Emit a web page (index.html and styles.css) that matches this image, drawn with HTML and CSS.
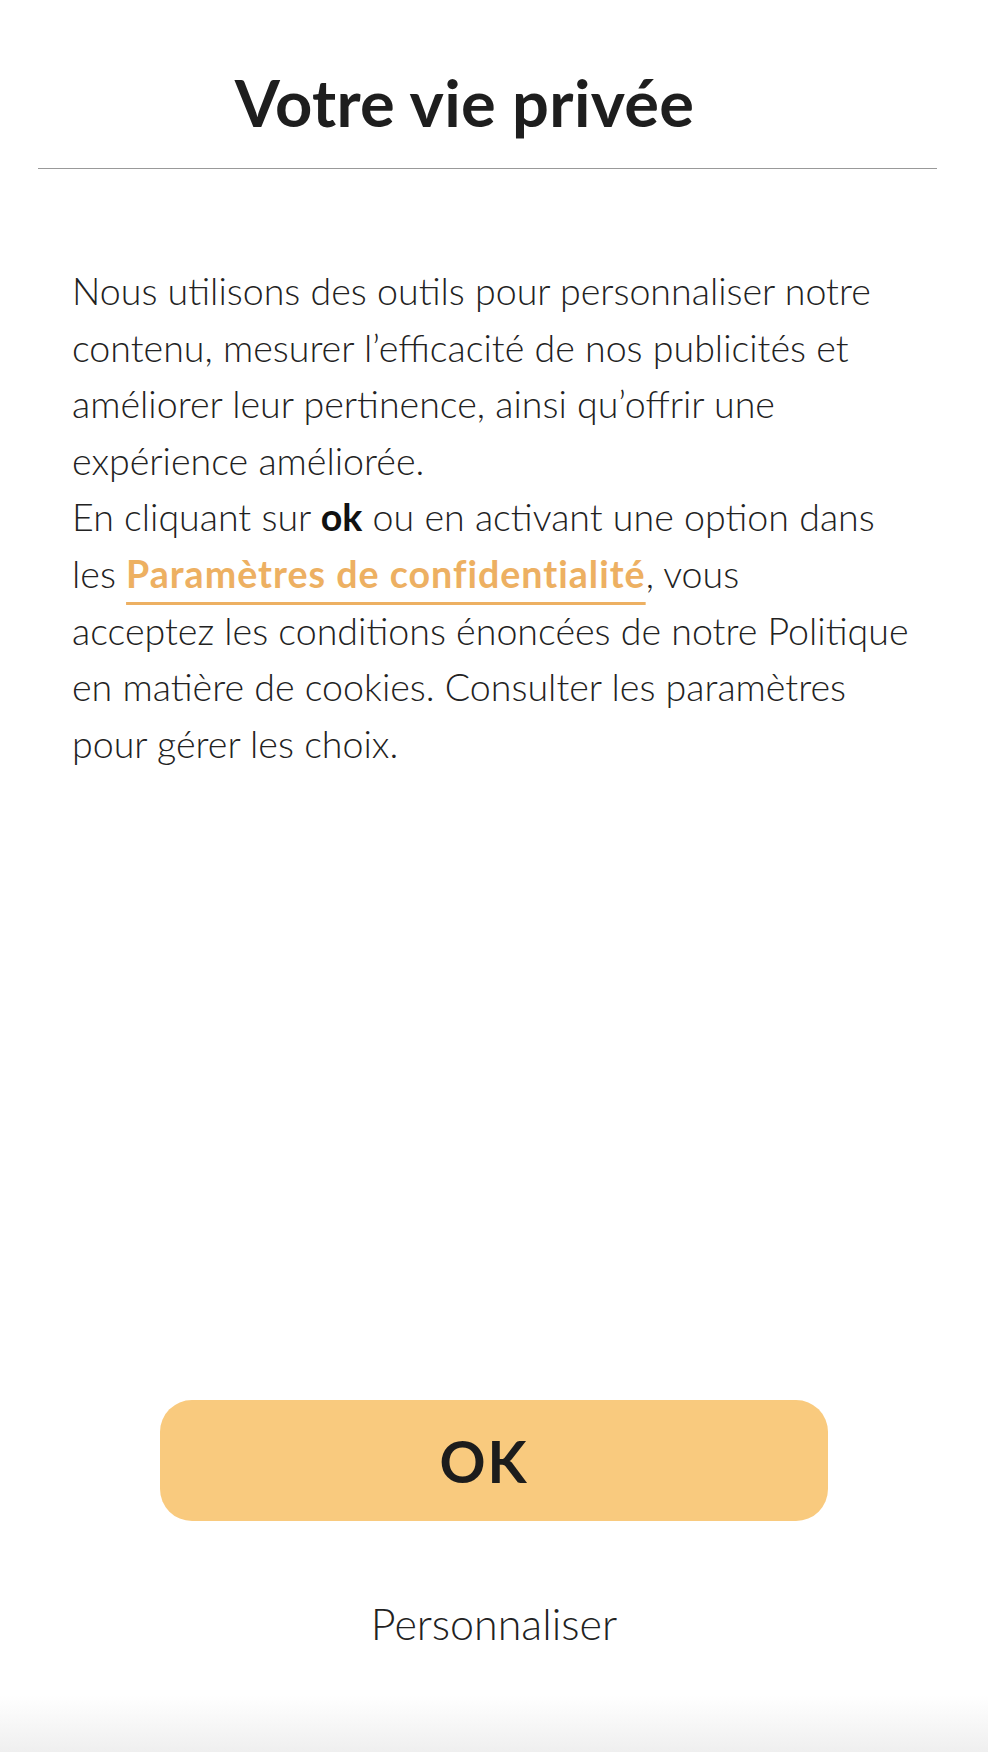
FILE: index.html
```html
<!DOCTYPE html>
<html lang="fr">
<head>
<meta charset="utf-8">
<title>Votre vie privée</title>
<link rel="stylesheet" href="styles.css">
</head>
<body>
<main class="consent">
  <header class="consent-head">
    <h1 class="consent-title">Votre vie privée</h1>
  </header>
  <section class="consent-body">
    <p class="consent-text">Nous utilisons des outils pour personnaliser notre<br>contenu, mesurer l’efficacité de nos publicités et<br>améliorer leur pertinence, ainsi qu’offrir une<br>expérience améliorée.<br>En cliquant sur <strong>ok</strong> ou en activant une option dans<br>les <a class="consent-link" href="#">Paramètres de confidentialité</a>, vous<br>acceptez les conditions énoncées de notre Politique<br>en matière de cookies. Consulter les paramètres<br>pour gérer les choix.</p>
  </section>
  <footer class="consent-actions">
    <button class="btn-ok" type="button">OK</button>
    <button class="btn-custom" type="button">Personnaliser</button>
  </footer>
</main>
</body>
</html>
```
FILE: styles.css
```css
html, body {
  margin: 0;
  padding: 0;
}
body {
  background: linear-gradient(to bottom, #ffffff 0, #ffffff 1695px, #efefef 1752px);
  min-height: 1752px;
  font-family: Lato, "Open Sans", sans-serif;
  color: #222;
}
.consent {
  display: flex;
  flex-direction: column;
  min-height: 1752px;
}
.consent-head {
  margin: 0 51px 0 38px;
  border-bottom: 1px solid #999;
  padding-top: 64px;
  padding-bottom: 28px;
}
.consent-title {
  margin: 0;
  text-align: center;
  padding-right: 46px;
  font-size: 65px;
  line-height: 76px;
  font-weight: 700;
  color: #1e1e1e;
  letter-spacing: 0.3px;
}
.consent-body {
  padding: 94px 40px 0 72px;
}
.consent-text {
  margin: 0;
  font-size: 37.6px;
  line-height: 56.6px;
  font-weight: 300;
  color: #222;
}
.consent-text strong {
  font-weight: 700;
  color: #111;
}
.consent-link {
  color: #edb062;
  font-weight: 700;
  letter-spacing: 1px;
  text-decoration: underline;
  text-decoration-thickness: 3px;
  text-underline-offset: 14px;
}
.consent-actions {
  margin-top: auto;
  display: flex;
  flex-direction: column;
  align-items: center;
  padding-bottom: 103px;
}
.btn-ok {
  width: 668px;
  height: 121px;
  border: 0;
  border-radius: 32px;
  background: #f9ca7e;
  color: #1c1c1c;
  padding: 0 20px 0 0;
  font-family: Lato, "Open Sans", sans-serif;
  font-size: 57px;
  font-weight: 700;
  letter-spacing: 2px;
  cursor: pointer;
}
.btn-custom {
  margin-top: 78px;
  border: 0;
  background: transparent;
  padding: 0;
  font-family: Lato, "Open Sans", sans-serif;
  font-size: 43px;
  line-height: 50px;
  font-weight: 300;
  color: #222;
  cursor: pointer;
}
```
